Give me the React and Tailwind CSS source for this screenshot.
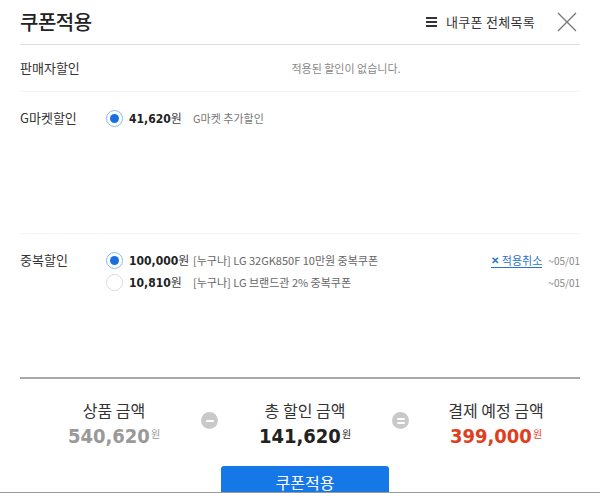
// App.jsx — 쿠폰적용 modal
const KR = { fontFamily: '"Noto Sans CJK KR", "Noto Sans", sans-serif' }
const NUM = { fontFamily: '"DejaVu Sans Condensed", "DejaVu Sans", "Noto Sans CJK KR", sans-serif' }

function Radio({ checked }) {
  return checked ? (
    <span className="w-[17px] h-[17px] rounded-full border border-[#8bb8ee] bg-white flex items-center justify-center shrink-0">
      <span className="w-[9px] h-[9px] rounded-full bg-[#1a6fe0]" />
    </span>
  ) : (
    <span className="w-[17px] h-[17px] rounded-full border border-[#dcdcdc] bg-white shrink-0" />
  )
}

function Op({ type }) {
  return (
    <span className="w-[17px] h-[17px] rounded-full bg-[#c9c9c9] flex flex-col items-center justify-center gap-[2px]">
      <span className="w-[8px] h-[2px] bg-white rounded-sm" />
      {type === "eq" && <span className="w-[8px] h-[2px] bg-white rounded-sm" />}
    </span>
  )
}

function Sum({ label, value, color }) {
  return (
    <div className="flex flex-col items-center w-[150px]">
      <p className="text-[16px] leading-[22px] text-[#333]" style={KR}>{label}</p>
      <p className="leading-[24px] mt-[1px] flex items-end">
        <span className={`text-[20px] font-bold ${color}`} style={NUM}>{value}</span>
        <span className={`text-[10px] ml-[1px] mb-[2px] ${color}`} style={KR}>원</span>
      </p>
    </div>
  )
}

function Amount({ value }) {
  return (
    <span className="w-[64px] ml-[6px] flex items-baseline shrink-0">
      <span className="text-[12px] font-bold text-[#222]" style={NUM}>{value}</span>
      <span className="text-[12px] text-[#444]">원</span>
    </span>
  )
}

export default function App() {
  return (
    <div className="w-[600px] h-[493px] bg-white relative overflow-hidden" style={KR}>
      {/* Header */}
      <div className="mx-5 h-[45px] flex items-center justify-between border-b border-[#dedede]">
        <h1 className="text-[20px] text-[#222] font-medium tracking-[-0.5px]">쿠폰적용</h1>
        <div className="flex items-center">
          <span className="flex flex-col gap-[2px] mr-[9px]">
            <span className="w-[11px] h-[2px] bg-[#333]" />
            <span className="w-[11px] h-[2px] bg-[#333]" />
            <span className="w-[11px] h-[2px] bg-[#333]" />
          </span>
          <span className="text-[13px] text-[#333] tracking-[0.3px]">내쿠폰 전체목록</span>
          <svg className="ml-[22px] mr-[3px]" width="20" height="20" viewBox="0 0 20 20" fill="none" stroke="#777" strokeWidth="1.3">
            <path d="M1 1 L19 19 M19 1 L1 19" />
          </svg>
        </div>
      </div>

      {/* 판매자할인 */}
      <div className="mx-5 h-[47px] flex items-center border-b border-[#f2f2f2]">
        <span className="w-[86px] text-[13px] text-[#333]">판매자할인</span>
        <span className="flex-1 text-center text-[11px] text-[#888] pl-[6px]">적용된 할인이 없습니다.</span>
      </div>

      {/* G마켓할인 */}
      <div className="mx-5 h-[142px] pt-[16px] flex border-b border-[#f4f4f4]">
        <span className="w-[86px] text-[13px] leading-[20px] text-[#333]">G마켓할인</span>
        <div className="flex items-center h-[20px]">
          <Radio checked />
          <Amount value="41,620" />
          <span className="text-[11px] text-[#777]">G마켓 추가할인</span>
        </div>
      </div>

      {/* 중복할인 */}
      <div className="mx-5 h-[143px] pt-[16px] flex">
        <span className="w-[86px] text-[13px] leading-[20px] text-[#333]">중복할인</span>
        <div className="flex-1 flex flex-col gap-[2px]">
          <div className="flex items-center h-[20px]">
            <Radio checked />
            <Amount value="100,000" />
            <span className="text-[11px] text-[#666]">[누구나] LG 32GK850F 10만원 중복쿠폰</span>
            <span className="ml-auto flex items-center text-[11px] text-[#2a73c9] border-b border-[#2a73c9] leading-[14px]">
              <span className="text-[10px] font-bold mr-[3px]">✕</span>적용취소
            </span>
            <span className="ml-[6px] text-[10px] text-[#888]">~05/01</span>
          </div>
          <div className="flex items-center h-[20px]">
            <Radio />
            <Amount value="10,810" />
            <span className="text-[11px] text-[#666]">[누구나] LG 브랜드관 2% 중복쿠폰</span>
            <span className="ml-auto text-[10px] text-[#888]">~05/01</span>
          </div>
        </div>
      </div>

      {/* Summary */}
      <div className="mx-5 border-t-2 border-[#a9a9a9] pt-[20px] pl-[10px] flex items-center justify-center">
        <Sum label="상품 금액" value="540,620" color="text-[#999]" />
        <span className="mx-[12px] -mt-[6px]"><Op type="minus" /></span>
        <Sum label="총 할인 금액" value="141,620" color="text-[#222]" />
        <span className="mx-[12px] -mt-[6px]"><Op type="eq" /></span>
        <Sum label="결제 예정 금액" value="399,000" color="text-[#de3f1e]" />
      </div>

      <div className="flex justify-center mt-[18px] pl-[10px]">
        <button className="w-[168px] h-[40px] rounded-t-[3px] bg-[#1677e6] text-white text-[16px] flex justify-center">
          <span className="mt-[4px]">쿠폰적용</span>
        </button>
      </div>

      <div className="absolute left-0 right-0 bottom-0 h-[1px] bg-[#9a9a9a]" />
    </div>
  )
}
